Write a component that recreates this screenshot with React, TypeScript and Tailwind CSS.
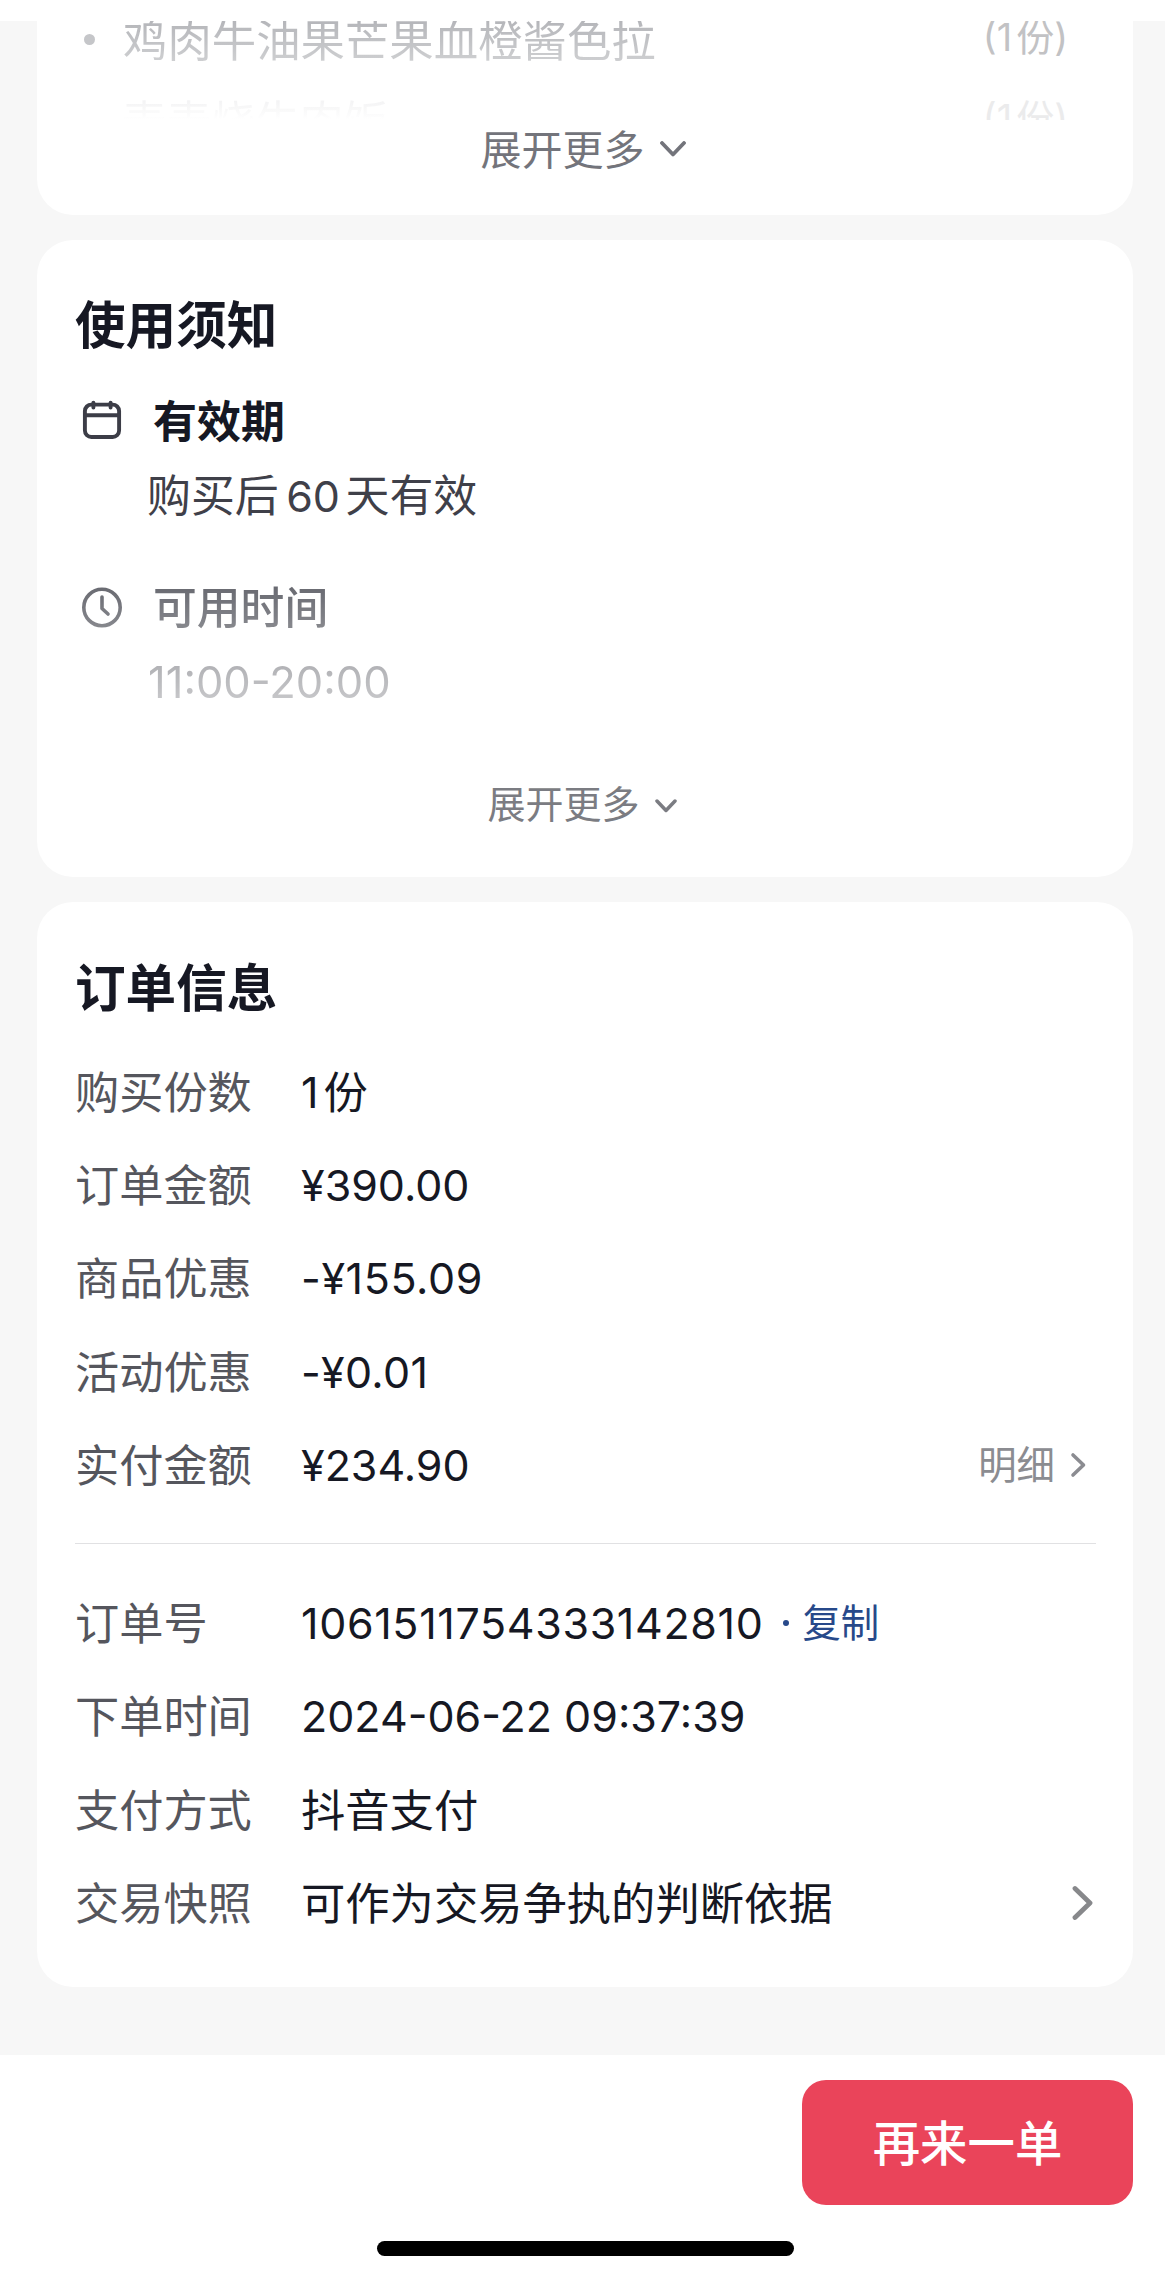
import type { ReactNode } from "react";

type RowProps = { label: string; children: ReactNode; extra?: ReactNode };

function Num({ children, className = "" }: { children: ReactNode; className?: string }) {
  return <span className={`text-[43px] ${className}`}>{children}</span>;
}

function Han({ children }: { children: ReactNode }) {
  return <span className="pt-[2px] text-[44.3px]">{children}</span>;
}

function Row({ label, children, extra }: RowProps) {
  return (
    <div className="flex h-[93.3px] items-center leading-[60px]">
      <span className="w-[226px] shrink-0 pt-[2px] text-[44.2px] text-[#55565d]">{label}</span>
      <span className="flex flex-1 items-center text-[#161823]">{children}</span>
      {extra}
    </div>
  );
}

function Chevron({ className, d, box, stroke }: { className: string; d: string; box: string; stroke: number }) {
  return (
    <svg className={className} viewBox={box} fill="none" stroke="currentColor" strokeWidth={stroke} strokeLinecap="round" strokeLinejoin="round">
      <path d={d} />
    </svg>
  );
}

function PackageCard() {
  return (
    <section className="h-[194px] rounded-b-[36px] bg-white pl-[47px] pr-[65px]">
      <div className="h-[99px] overflow-hidden">
        <div className="flex h-[40px] items-center">
          <span className="-mt-[3px] size-[11px] shrink-0 rounded-full bg-[#c5c6c9]" />
          <span className="ml-[28px] flex-1 bg-linear-to-b from-[#b4b5b9] to-[#cfd0d2] bg-clip-text text-[44.4px] leading-[44px] text-transparent">鸡肉牛油果芒果血橙酱色拉</span>
          <span className="-mt-[9px] flex text-[38px] leading-[40px] text-[#c2c2c4]">
            (1<span className="ml-[4px]">份)</span>
          </span>
        </div>
        <div className="mt-[41px] flex h-[40px] items-center">
          <span className="ml-[38px] flex-1 bg-linear-to-b from-[#f3f3f4] to-[#ffffff] to-45% bg-clip-text text-[44.4px] leading-[44px] text-transparent">麦麦烧牛肉饭</span>
          <span className="-mt-[9px] flex text-[38px] leading-[40px] text-[#ebebec]">
            (1<span className="ml-[4px]">份)</span>
          </span>
        </div>
      </div>
      <div className="ml-[14px] flex h-[59px] items-center justify-center text-[41px] leading-[50px] text-[#73747b]">
        <span>展开更多</span>
        <Chevron className="-mt-px ml-[15px] h-[16px] w-[26px]" box="0 0 26 16" d="M2 2 L13 13.5 L24 2" stroke={3.8} />
      </div>
    </section>
  );
}

function NoticeCard() {
  return (
    <section className="h-[637px] rounded-[36px] bg-white px-[38px] pt-[56px]">
      <h2 className="h-[60px] text-[50.6px] font-bold leading-[60px] text-[#161823]">使用须知</h2>
      <div className="mt-[35px] flex h-[60px] items-center">
        <svg className="-mt-[2px] ml-[7px] h-[40px] w-[40px] text-[#3c3d47]" viewBox="0 0 40 40" fill="none" stroke="currentColor" strokeWidth="3.9" strokeLinecap="round">
          <rect x="2.9" y="4.6" width="34.2" height="32.4" rx="6.5" />
          <path d="M2.9 15.2 H37.1 M11.4 2.6 V7.6 M28.6 2.6 V7.6" />
        </svg>
        <span className="ml-[31px] pt-px text-[44px] font-bold leading-[60px] text-[#161823]">有效期</span>
      </div>
      <p className="ml-[72px] mt-[15px] flex h-[60px] items-center text-[43.9px] leading-[60px] text-[#3f4049]">
        <span>购买后</span>
        <span className="ml-[7.5px] mr-[5.5px] text-[43px]">60</span>
        <span>天有效</span>
      </p>
      <div className="mt-[52px] [mask-image:linear-gradient(to_bottom,rgba(0,0,0,0.67)_0,rgba(0,0,0,0.24)_140px)]">
        <div className="flex h-[60px] items-center">
          <svg className="ml-[6px] h-[42px] w-[42px] text-[#161823]" viewBox="0 0 42 42" fill="none" stroke="currentColor" strokeWidth="3.6" strokeLinecap="round" strokeLinejoin="round">
            <circle cx="21" cy="20.5" r="18.2" />
            <path d="M21 10 V21.5 L27 27" />
          </svg>
          <span className="ml-[30px] pt-px text-[43.8px] font-medium leading-[60px] text-[#161823]">可用时间</span>
        </div>
        <p className="ml-[73px] mt-[14px] text-[43.5px] leading-[60px] text-[#3f4049]">11:00-20:00</p>
      </div>
      <div className="mr-[6px] mt-[67px] flex h-[50px] items-center justify-center text-[38px] leading-[50px] text-[#7b7c82]">
        <span>展开更多</span>
        <Chevron className="ml-[15px] mt-[3px] h-[14px] w-[22px]" box="0 0 22 14" d="M2 2 L11 11.5 L20 2" stroke={3.5} />
      </div>
    </section>
  );
}

function OrderCard() {
  return (
    <section className="h-[1085px] rounded-[36px] bg-white pl-[38px] pr-[37px] pt-[57px]">
      <h2 className="h-[60px] text-[50.6px] font-bold leading-[60px] text-[#161823]">订单信息</h2>
      <div className="mt-[26px]">
        <Row label="购买份数">
          <Num className="mr-[5px]">1</Num>
          <Han>份</Han>
        </Row>
        <Row label="订单金额"><Num>¥390.00</Num></Row>
        <Row label="商品优惠"><Num className="tracking-[0.6px]">-¥155.09</Num></Row>
        <Row label="活动优惠"><Num className="tracking-[0.3px]">-¥0.01</Num></Row>
        <Row
          label="实付金额"
          extra={
            <span className="mr-[9px] flex items-center text-[38.4px] text-[#8b8c91]">
              <span className="pt-px">明细</span>
              <Chevron className="ml-[15px] h-[26px] w-[17px]" box="0 0 17 26" d="M3 3 L13.5 13 L3 23" stroke={3.6} />
            </span>
          }
        >
          <Num>¥234.90</Num>
        </Row>
      </div>
      <div className="mt-[32px] h-px bg-[#e1e1e3]" />
      <div className="mt-[32px]">
        <Row label="订单号">
          <Num className="tracking-[0.65px]">1061511754333142810</Num>
          <span className="ml-[20px] size-[6px] rounded-full bg-[#27498a]" />
          <span className="ml-[13px] text-[38.4px] text-[#27498a]">复制</span>
        </Row>
        <Row label="下单时间"><Num>2024-06-22 09:37:39</Num></Row>
        <Row label="支付方式"><Han>抖音支付</Han></Row>
        <Row
          label="交易快照"
          extra={<Chevron className="mr-[2px] h-[36px] w-[22px] text-[#87888b]" box="0 0 22 36" d="M3 3.5 L18 18 L3 32.5" stroke={4.8} />}
        >
          <Han>可作为交易争执的判断依据</Han>
        </Row>
      </div>
    </section>
  );
}

export default function App() {
  return (
    <div className="flex h-[2278px] w-[1165px] flex-col overflow-hidden bg-[#f7f7f7] font-['Inter','Noto_Sans_CJK_SC',sans-serif]">
      <div className="h-[21px] shrink-0 bg-white" />
      <main className="flex flex-1 flex-col gap-[25px] pl-[37px] pr-[32px]">
        <PackageCard />
        <NoticeCard />
        <OrderCard />
      </main>
      <footer className="flex h-[223px] shrink-0 flex-col bg-white pt-[25px]">
        <button className="mr-[32px] h-[125px] w-[331px] self-end rounded-[24px] bg-[#ea445a] pt-[2px] text-[47.4px] font-medium leading-[60px] text-white">再来一单</button>
        <div className="ml-[377px] mt-[36px] h-[15px] w-[417px] rounded-full bg-black" />
      </footer>
    </div>
  );
}
